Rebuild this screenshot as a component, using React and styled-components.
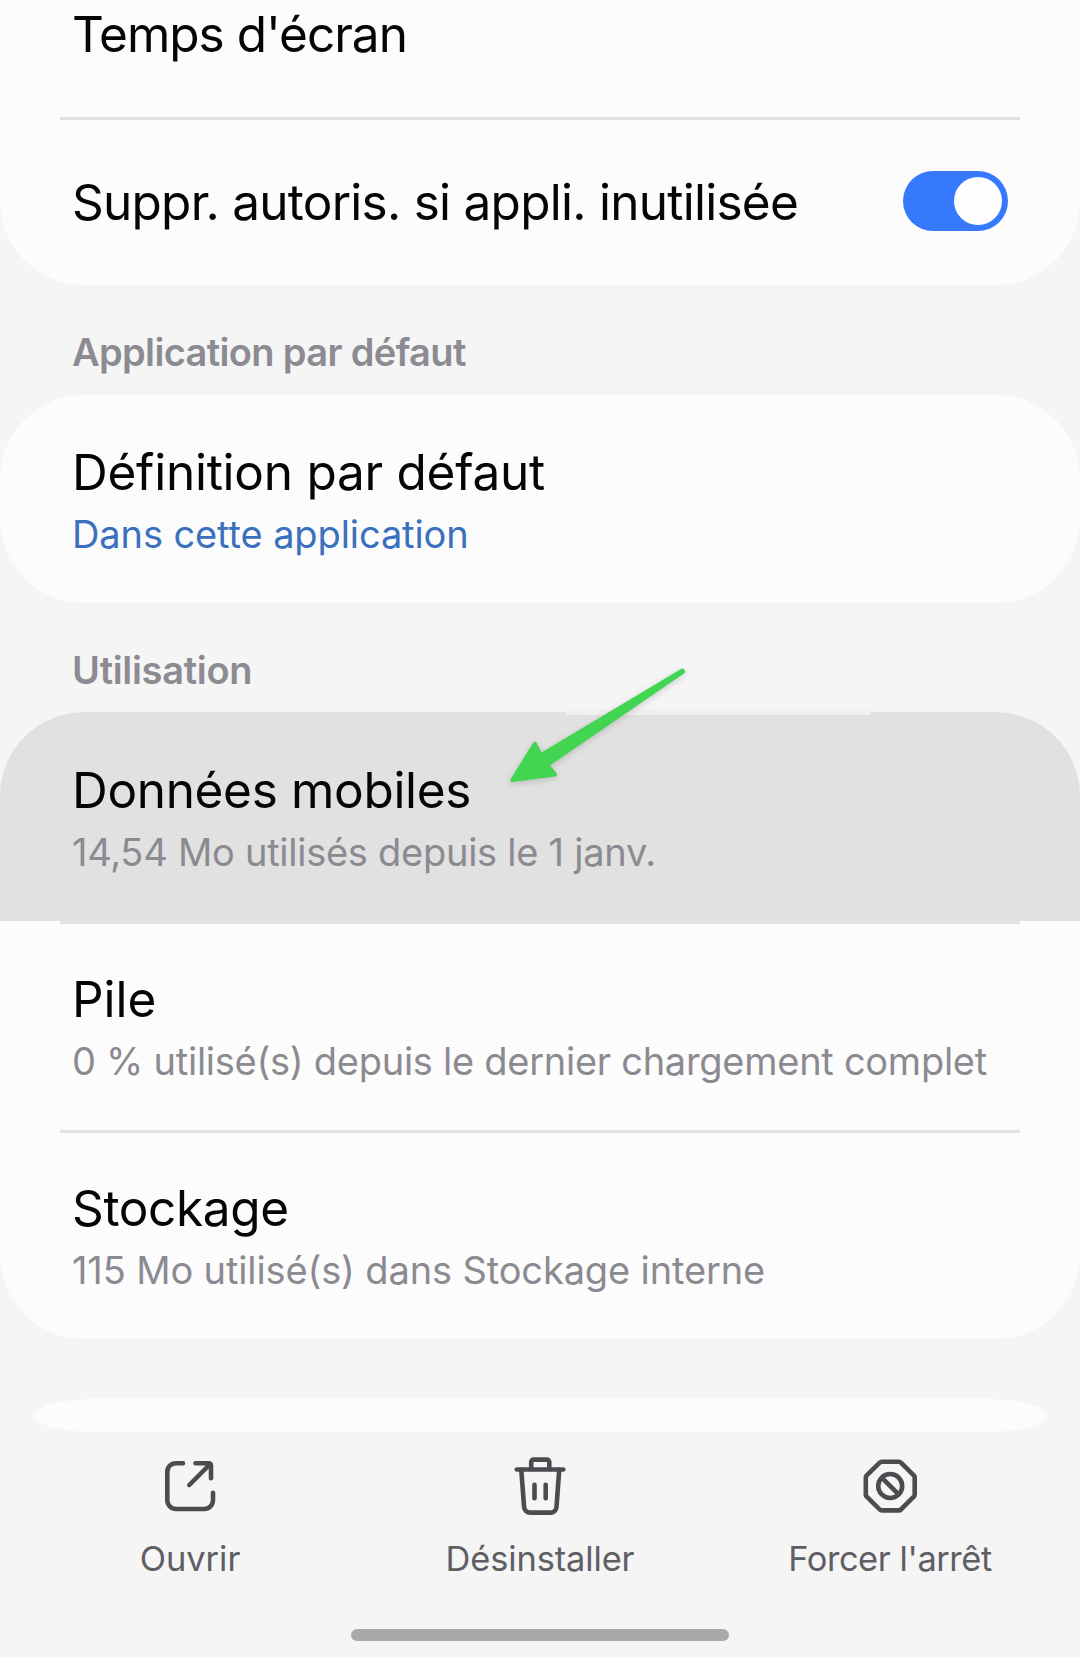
import React from "react";
import styled, { createGlobalStyle } from "styled-components";

const GlobalStyle = createGlobalStyle`
  *, *::before, *::after { box-sizing: border-box; }
  html, body { margin: 0; padding: 0; background: #f5f5f6; }
  body { font-family: Inter, Roboto, "Liberation Sans", sans-serif; }
`;

const Screen = styled.main`
  display: flex;
  flex-direction: column;
  width: 1080px;
  height: 1657px;
  overflow: hidden;
  background: #f5f5f6;
`;

const Card = styled.section`
  position: relative;
  display: flex;
  flex-direction: column;
  flex: none;
  background: #fcfcfd;
  border-radius: ${(p) => (p.$continued ? "0 0 84px 84px" : "84px")};
`;

const Row = styled.div`
  display: flex;
  align-items: center;
  justify-content: space-between;
  height: ${(p) => p.$height || 209}px;
  padding: ${(p) => p.$padding || "2px 72px 0"};
  background: ${(p) => (p.$pressed ? "#e1e1e1" : "transparent")};
  border-radius: ${(p) => (p.$pressed ? "84px 84px 0 0" : "0")};
`;

const RowText = styled.div`
  display: flex;
  flex-direction: column;
  gap: 9px;
`;

const Title = styled.div`
  font-size: 49.5px;
  line-height: 60px;
  letter-spacing: ${(p) => p.$tracking || 0}px;
  color: #050505;
  white-space: nowrap;
`;

const Subtitle = styled.div`
  font-size: 38px;
  line-height: 46px;
  letter-spacing: ${(p) => p.$tracking || 0}px;
  color: ${(p) => (p.$link ? "#3b70be" : "#8b8a90")};
  white-space: nowrap;
`;

const SectionTitle = styled.h2`
  flex: none;
  margin: 0;
  height: ${(p) => p.$height}px;
  padding: 44px 72px 0;
  font-size: 38px;
  font-weight: 600;
  line-height: 46px;
  letter-spacing: ${(p) => p.$tracking || 0}px;
  color: #8c8b91;
  white-space: nowrap;
`;

const Divider = styled.hr`
  flex: none;
  width: 960px;
  height: 3px;
  margin: 0 60px -3px;
  border: 0;
  background: #e2e2e3;
`;

const Switch = styled.button`
  display: flex;
  justify-content: flex-end;
  align-items: center;
  width: 105px;
  height: 60px;
  margin-bottom: 2px;
  padding: 0 6px;
  border: 0;
  border-radius: 30px;
  background: #3779fd;
`;

const Thumb = styled.span`
  width: 48px;
  height: 48px;
  border-radius: 50%;
  background: #fefefe;
`;

const EdgeMark = styled.div`
  position: absolute;
  left: 566px;
  top: -3px;
  width: 304px;
  height: 6px;
  background: #f0f0f0;
`;

const Pointer = styled.svg`
  position: absolute;
  left: 500px;
  top: -52px;
  overflow: visible;
  filter: drop-shadow(0 2px 3px rgba(0, 0, 0, 0.16));
`;

const NextCard = styled.div`
  flex: none;
  width: 1013px;
  height: 33px;
  margin: 60px auto 0;
  border-radius: 62px / 16.5px;
  background: #fcfcfd;
`;

const ActionBar = styled.nav`
  flex: none;
  display: grid;
  grid-template-columns: repeat(3, 350px);
  justify-content: center;
  margin-top: 8px;
`;

const Action = styled.button`
  display: flex;
  flex-direction: column;
  align-items: center;
  gap: 8px;
  padding: 0;
  border: 0;
  background: none;
  font-family: inherit;
  font-size: 34.4px;
  line-height: 42px;
  letter-spacing: ${(p) => p.$tracking || 0}px;
  color: #5f5e64;
  white-space: nowrap;
`;

const Icon = styled.svg`
  width: 100px;
  height: 90px;
  fill: none;
  stroke: #4c4b50;
  stroke-width: 4.6;
  stroke-linecap: round;
  stroke-linejoin: round;
`;

const HomeIndicator = styled.div`
  flex: none;
  width: 378px;
  height: 12px;
  margin: 49px auto 0;
  border-radius: 6px;
  background: #a9a9a9;
`;

const OpenIcon = () => (
  <Icon viewBox="0 0 100 90">
    <path d="M43 23.200H36a8.700 8.700 0 0 0-8.700 8.700V60.300a8.700 8.700 0 0 0 8.700 8.700H64.300a8.700 8.700 0 0 0 8.700-8.700V52.700" />
    <path d="M55.500 23.200H68.800a2.200 2.200 0 0 1 2.200 2.200V38.300" />
    <path d="M49.300 45 70.200 24" />
  </Icon>
);

const TrashIcon = () => (
  <Icon viewBox="0 0 100 90">
    <path d="M26.800 29.500H73.300" />
    <path d="M41.200 29V21.900a2.300 2.300 0 0 1 2.300-2.300H57a2.300 2.300 0 0 1 2.300 2.300V29" />
    <path d="M31.300 30 34.100 67a6 6 0 0 0 6 5.600H60.500a6 6 0 0 0 6-5.600L69.200 30" />
    <path d="M44.500 44.800V58.200M55.700 44.800V58.200" />
  </Icon>
);

const StopIcon = () => (
  <Icon viewBox="0 0 100 90">
    <path d="M41.800 21.700H58.800a3 3 0 0 1 2.100.9L73.800 35.300a3 3 0 0 1 .9 2.100V54.600a3 3 0 0 1-.9 2.100L60.900 69.500a3 3 0 0 1-2.100.9H41.800a3 3 0 0 1-2.100-.9L26.700 56.700a3 3 0 0 1-.9-2.100V37.400a3 3 0 0 1 .9-2.100L39.700 22.600a3 3 0 0 1 2.100-.9Z" />
    <circle cx="50.200" cy="46" r="12" />
    <path d="M42 37.800 58.400 54.200" />
  </Icon>
);

export default function App() {
  return (
    <>
      <GlobalStyle />
      <Screen>
        <Card $continued>
          <Row $height={117} $padding="0 72px 49px">
            <Title $tracking={-1}>Temps d'écran</Title>
          </Row>
          <Divider />
          <Row $height={168} $padding="2px 72px 0">
            <Title $tracking={-0.74}>Suppr. autoris. si appli. inutilisée</Title>
            <Switch type="button" role="switch" aria-checked="true">
              <Thumb />
            </Switch>
          </Row>
        </Card>

        <SectionTitle $height={110} $tracking={-0.65}>
          Application par défaut
        </SectionTitle>
        <Card>
          <Row $height={208} $padding="2px 72px 1px">
            <RowText>
              <Title $tracking={-0.25}>Définition par défaut</Title>
              <Subtitle $link $tracking={-0.1}>
                Dans cette application
              </Subtitle>
            </RowText>
          </Row>
        </Card>

        <SectionTitle $height={109} $tracking={-0.32}>
          Utilisation
        </SectionTitle>
        <Card>
          <Row $pressed>
            <RowText>
              <Title $tracking={-0.33}>Données mobiles</Title>
              <Subtitle $tracking={-0.26}>14,54 Mo utilisés depuis le 1 janv.</Subtitle>
            </RowText>
          </Row>
          <Divider />
          <Row>
            <RowText>
              <Title>Pile</Title>
              <Subtitle $tracking={-0.27}>
                0 % utilisé(s) depuis le dernier chargement complet
              </Subtitle>
            </RowText>
          </Row>
          <Divider />
          <Row>
            <RowText>
              <Title $tracking={-0.35}>Stockage</Title>
              <Subtitle $tracking={-0.13}>115 Mo utilisé(s) dans Stockage interne</Subtitle>
            </RowText>
          </Row>
          <EdgeMark />
          <Pointer width="200" height="130" viewBox="500 660 200 130">
            <path
              d="M682.400 670.500 540.800 755.300 534.900 743.900 512.300 780 555 774.400 547.200 764.900 683.200 671.600Z"
              fill="#42d552"
              stroke="#42d552"
              strokeWidth="4"
              strokeLinejoin="round"
            />
          </Pointer>
        </Card>

        <NextCard />

        <ActionBar>
          <Action type="button">
            <OpenIcon />
            Ouvrir
          </Action>
          <Action type="button" $tracking={-0.11}>
            <TrashIcon />
            Désinstaller
          </Action>
          <Action type="button" $tracking={-0.41}>
            <StopIcon />
            Forcer l'arrêt
          </Action>
        </ActionBar>
        <HomeIndicator />
      </Screen>
    </>
  );
}
